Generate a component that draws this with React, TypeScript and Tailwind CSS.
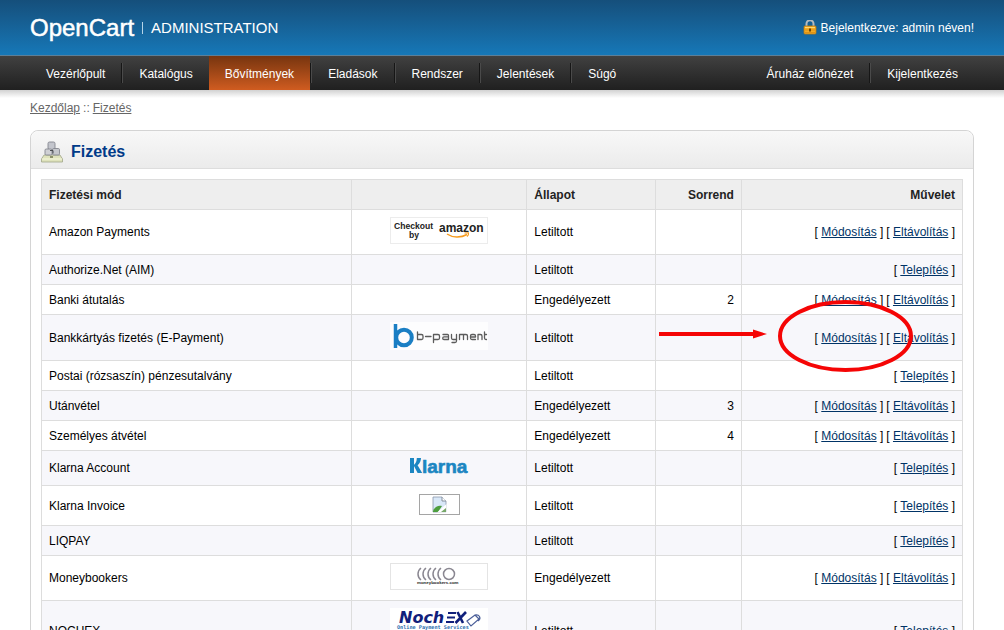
import React from 'react';

type Action = 'Módosítás' | 'Eltávolítás' | 'Telepítés';

interface PaymentMethod {
  name: string;
  status: 'Letiltott' | 'Engedélyezett';
  sortOrder?: number;
  actions: Action[];
  height: string;
  logo?: React.ReactNode;
  marked?: boolean;
}

const AmazonLogo: React.FC = () => (
  <svg width="98" height="28" viewBox="0 0 98 28" role="img" aria-label="Checkout by Amazon">
    <rect x="0.5" y="0.5" width="97" height="26" fill="#fff" stroke="#ececec" />
    <g fontFamily="Liberation Sans, sans-serif" fontWeight="bold" fill="#222">
      <text x="4" y="12" fontSize="8.600">Checkout</text>
      <text x="19" y="21" fontSize="8.600">by</text>
      <text x="49" y="15" fontSize="12">amazon</text>
    </g>
    <path d="M57 17c5.500 3.800 14 3.800 20 0.500" fill="none" stroke="#f79b1d" strokeWidth="1.500" />
    <path d="M74.500 16l4-0.200c0.400 1.200-0.500 2.900-1.500 3.900" fill="none" stroke="#f79b1d" strokeWidth="1.100" />
  </svg>
);

const BPaymentLogo: React.FC = () => (
  <svg width="98" height="28" viewBox="0 0 98 28" role="img" aria-label="b-payment">
    <rect width="98" height="28" fill="#fdfdfe" />
    <path d="M5.500 2v24" stroke="#1b7fc4" strokeWidth="3.500" />
    <circle cx="14" cy="15.500" r="7.800" fill="none" stroke="#1b7fc4" strokeWidth="4" />
    <g fill="none" stroke="#5c5c5c" strokeWidth="1.300" strokeLinecap="round" strokeLinejoin="round">
      <path d="M27.500 10v7.500h4a1.500 1.500 0 0 0 1.500-1.500v-2a1.500 1.500 0 0 0-1.500-1.500h-4" />
      <path d="M35.500 14.500h5.500" />
      <path d="M43.500 20.500v-8h4.500a1.500 1.500 0 0 1 1.500 1.500v2a1.500 1.500 0 0 1-1.500 1.500h-4.500" />
      <path d="M53 12.500h4.500a1 1 0 0 1 1 1v4h-4.500a1.300 1.300 0 0 1 0-2.600h4.500" />
      <path d="M61.500 12.500v3.500a1.500 1.500 0 0 0 1.500 1.500h3.500v-5m0 5v1.500a1.500 1.500 0 0 1-1.500 1.500h-3" />
      <path d="M69.500 17.500v-5h6.500a1.500 1.500 0 0 1 1.500 1.500v3.500m-4-5v5" />
      <path d="M80.500 15h5v-1a1.500 1.500 0 0 0-1.500-1.500h-2a1.500 1.500 0 0 0-1.500 1.500v2a1.500 1.500 0 0 0 1.500 1.500h3.500" />
      <path d="M88 17.500v-5h2.500a1.500 1.500 0 0 1 1.500 1.500v3.500" />
      <path d="M94.500 10v6a1.500 1.500 0 0 0 1.500 1.500h0.500m-2-5h2" />
    </g>
  </svg>
);

const KlarnaLogo: React.FC = () => (
  <svg width="60" height="22" viewBox="0 0 60 22" role="img" aria-label="Klarna">
    <path d="M1 2h4v15h-4zM12 2c0 3-1.200 5.300-3.400 7.200l4.600 7.800h-4.600l-4-7.800c2.200-1.600 3.200-4 3.200-7.200z" fill="#1c86c2" />
    <text x="13" y="17" fontSize="19" fontWeight="bold" fontFamily="Liberation Sans, sans-serif" fill="#1c86c2" stroke="#1c86c2" strokeWidth="0.600">
      larna
    </text>
  </svg>
);

const MissingImage: React.FC = () => (
  <svg width="41" height="21" viewBox="0 0 41 21" role="img" aria-label="Klarna Invoice">
    <rect x="0.5" y="0.5" width="40" height="20" fill="#fff" stroke="#a5a5a5" />
    <path d="M14 3h9l4 4v11h-13z" fill="#d9e8f8" stroke="#8b98ab" strokeWidth="0.800" />
    <path d="M23 3v4h4" fill="#fff" stroke="#7b8794" strokeWidth="0.900" />
    <path d="M14 17c2-5 6-6 9-5l-4 6h-5z" fill="#4d9e3e" />
    <path d="M27.500 10l-9.500 8.500h9.500z" fill="#fff" />
    <path d="M22 18l5-4v4z" fill="#76a768" />
  </svg>
);

const MoneybookersLogo: React.FC = () => (
  <svg width="98" height="28" viewBox="0 0 98 28" role="img" aria-label="Moneybookers">
    <rect x="0.5" y="0.5" width="97" height="26" fill="#fff" stroke="#e4e4e4" />
    <g fill="none" stroke="#8a8791" strokeWidth="1.500">
      <path d="M31 5c-4 3-4 9 0 12M36 5c-4 3-4 9 0 12M41 5c-4 3-4 9 0 12M46 5c-4 3-4 9 0 12M51 5c-4 3-4 9 0 12" />
      <circle cx="59" cy="11" r="5.500" />
    </g>
    <text x="27" y="21" fontSize="4.400" fontWeight="bold" fontFamily="Liberation Sans, sans-serif" fill="#222">moneybookers.com</text>
  </svg>
);

const NochexLogo: React.FC = () => (
  <svg width="98" height="42" viewBox="0 0 98 42" role="img" aria-label="Nochex">
    <rect width="98" height="42" fill="#fff" />
    <text x="9" y="15" fontSize="16" fontWeight="bold" fontStyle="italic" fontFamily="DejaVu Sans, sans-serif" fill="#10207b">Noch</text>
    <path d="M58 5h8M57 9.500h8M56 14h8" stroke="#10207b" strokeWidth="2.200" />
    <path d="M67.500 4l5.500 11M76 4l-10.500 11" stroke="#10207b" strokeWidth="2.600" />
    <path d="M77 13l8-6 4 4-8 7zM85 7c4-1 7 3 3 6" fill="none" stroke="#4b5f99" strokeWidth="1.200" />
    <text x="7" y="21" fontSize="5.200" fontWeight="bold" fontFamily="DejaVu Sans Mono, monospace" fill="#2d6faf">Online Payment Services</text>
  </svg>
);

const LockIcon: React.FC = () => (
  <svg width="14" height="16" viewBox="0 0 14 16" aria-hidden="true">
    <path d="M3.500 7V3.800a3.500 3.500 0 0 1 7 0V7" fill="none" stroke="#b4babd" strokeWidth="2" />
    <rect x="1" y="6" width="12" height="8" rx="1" fill="#f5ac22" stroke="#b97813" strokeWidth="0.800" />
    <path d="M2 7.500h10" stroke="#ffd872" />
    <path d="M2 10h10M2 12.500h10" stroke="#d98c12" strokeWidth="0.800" />
    <path d="M7 8.500v3" stroke="#5f3b05" strokeWidth="1.800" />
  </svg>
);

const PaymentIcon: React.FC = () => (
  <svg width="22" height="22" viewBox="0 0 22 22" aria-hidden="true">
    <path d="M3 14h16l2.500 4v3h-21v-3z" fill="#dfe3bc" stroke="#a0a488" strokeWidth="0.800" />
    <path d="M1 18h20" stroke="#f6f8df" />
    <rect x="7" y="1" width="7" height="7.500" rx="1.500" fill="#c3c5cc" stroke="#85878e" strokeWidth="0.900" />
    <rect x="4" y="8" width="7" height="6" rx="1.200" fill="#cfd0d4" stroke="#85878e" strokeWidth="0.900" />
    <rect x="11.500" y="7.500" width="7" height="6.500" rx="1.200" fill="#c5c7cc" stroke="#85878e" strokeWidth="0.900" />
    <path d="M9 9.500h3v3" fill="none" stroke="#4b4d52" />
    <path d="M9 16h3" stroke="#72764f" strokeWidth="1.500" />
  </svg>
);

const Marker: React.FC = () => (
  <svg
    className="pointer-events-none absolute -top-5 right-11 max-w-none"
    width="260"
    height="84"
    viewBox="0 0 260 84"
    aria-hidden="true"
  >
    <path d="M1 39h96" stroke="#f50505" strokeWidth="4" />
    <path d="M95 34.500l14 4.500-14 4.500z" fill="#f50505" />
    <ellipse cx="187.500" cy="41" rx="65.500" ry="34" fill="none" stroke="#f50505" strokeWidth="4" />
  </svg>
);

const methods: PaymentMethod[] = [
  { name: 'Amazon Payments', status: 'Letiltott', actions: ['Módosítás', 'Eltávolítás'], height: 'h-[45px]', logo: <AmazonLogo /> },
  { name: 'Authorize.Net (AIM)', status: 'Letiltott', actions: ['Telepítés'], height: 'h-[30px]' },
  { name: 'Banki átutalás', status: 'Engedélyezett', sortOrder: 2, actions: ['Módosítás', 'Eltávolítás'], height: 'h-[30px]' },
  { name: 'Bankkártyás fizetés (E-Payment)', status: 'Letiltott', actions: ['Módosítás', 'Eltávolítás'], height: 'h-[46px]', logo: <BPaymentLogo />, marked: true },
  { name: 'Postai (rózsaszín) pénzesutalvány', status: 'Letiltott', actions: ['Telepítés'], height: 'h-[30px]' },
  { name: 'Utánvétel', status: 'Engedélyezett', sortOrder: 3, actions: ['Módosítás', 'Eltávolítás'], height: 'h-[30px]' },
  { name: 'Személyes átvétel', status: 'Engedélyezett', sortOrder: 4, actions: ['Módosítás', 'Eltávolítás'], height: 'h-[30px]' },
  { name: 'Klarna Account', status: 'Letiltott', actions: ['Telepítés'], height: 'h-[35px]', logo: <KlarnaLogo /> },
  { name: 'Klarna Invoice', status: 'Letiltott', actions: ['Telepítés'], height: 'h-[40px]', logo: <MissingImage /> },
  { name: 'LIQPAY', status: 'Letiltott', actions: ['Telepítés'], height: 'h-[30px]' },
  { name: 'Moneybookers', status: 'Engedélyezett', actions: ['Módosítás', 'Eltávolítás'], height: 'h-[45px]', logo: <MoneybookersLogo /> },
  { name: 'NOCHEX', status: 'Letiltott', actions: ['Telepítés'], height: 'h-[60px]', logo: <NochexLogo /> },
];

const mainMenu = ['Vezérlőpult', 'Katalógus', 'Bővítmények', 'Eladások', 'Rendszer', 'Jelentések', 'Súgó'];
const userMenu = ['Áruház előnézet', 'Kijelentkezés'];

const Menu: React.FC<{ items: string[]; active?: string }> = ({ items, active }) => (
  <ul className="flex">
    {items.map((item, i) => {
      const isActive = item === active;
      const divided = i < items.length - 1 && items[i + 1] !== active;
      return (
        <li key={item} className="flex items-center">
          <a
            href="#"
            className={`flex h-[34px] items-center px-4 pt-px text-white ${
              isActive ? 'bg-linear-to-b from-[#77350f] to-[#d05c20]' : ''
            }`}
          >
            {item}
          </a>
          {divided && <span className="h-5 w-0.5 border-l border-[#161616] bg-[#4a4a4a]" />}
        </li>
      );
    })}
  </ul>
);

const Header: React.FC = () => (
  <header>
    <div className="flex h-[55px] items-center justify-between bg-linear-to-b from-[#154f7b] to-[#1678b8] px-[30px] text-white">
      <div className="flex items-center">
        <span className="text-2xl leading-7 [-webkit-text-stroke:0.5px_white]">OpenCart</span>
        <span className="mx-2 h-3 w-px bg-[#b5d4e8]" />
        <span className="text-[15px] leading-7">ADMINISTRATION</span>
      </div>
      <div className="flex items-center gap-1">
        <LockIcon />
        <span>Bejelentkezve: admin néven!</span>
      </div>
    </div>
    <nav className="flex justify-between border-t border-[#5d7f97] bg-linear-to-b from-[#414141] to-[#202020] px-[30px]">
      <Menu items={mainMenu} active="Bővítmények" />
      <Menu items={userMenu} />
    </nav>
    <div className="h-2 bg-linear-to-b from-[#d2d2d2] to-white" />
  </header>
);

const headCell = 'h-[30px] border-r border-b border-[#dddddd] px-[7px] font-bold text-[#222222]';
const bodyCell = 'border-r border-b border-[#dddddd] px-[7px]';

const MethodRow: React.FC<{ method: PaymentMethod }> = ({ method }) => (
  <tr className="odd:bg-white even:bg-[#f7f7fb]">
    <td className={`${bodyCell} ${method.height}`}>{method.name}</td>
    <td className={bodyCell}>
      <div className="flex justify-center pb-[3px]">{method.logo}</div>
    </td>
    <td className={bodyCell}>{method.status}</td>
    <td className={`${bodyCell} text-right`}>{method.sortOrder}</td>
    <td className={`${bodyCell} relative text-right whitespace-nowrap`}>
      {method.actions.map((action) => (
        <span key={action} className="ml-[3px]">
          [ <a href="#" className="text-[#003366] underline">{action}</a> ]
        </span>
      ))}
      {method.marked && <Marker />}
    </td>
  </tr>
);

function App() {
  return (
    <div className="min-h-screen bg-white font-['Liberation_Sans',Arial,sans-serif] text-xs text-black">
      <Header />
      <main className="px-[30px] pb-6">
        <div className="mt-0.5 flex gap-[3px] leading-4 text-[#666666]">
          <a href="#" className="underline">Kezdőlap</a>
          <span>::</span>
          <a href="#" className="underline">Fizetés</a>
        </div>
        <section className="mt-[14px] rounded-t-lg border border-[#d4d4d4]">
          <div className="flex h-[38px] items-center gap-2 rounded-t-lg border-b border-[#dddddd] bg-linear-to-b from-[#f8f8f8] to-[#ebebeb] px-[10px] pt-1">
            <PaymentIcon />
            <h1 className="text-base font-bold text-[#003a88]">Fizetés</h1>
          </div>
          <div className="p-[10px]">
            <table className="w-full table-fixed border-separate border-spacing-0 border-t border-l border-[#dddddd]">
              <colgroup>
                <col className="w-[33.7%]" />
                <col className="w-[19%]" />
                <col className="w-[14%]" />
                <col className="w-[9.3%]" />
                <col className="w-[24%]" />
              </colgroup>
              <thead className="bg-[#eeeeee]">
                <tr>
                  <th className={`${headCell} text-left`}>Fizetési mód</th>
                  <th className={headCell}></th>
                  <th className={`${headCell} text-left`}>Állapot</th>
                  <th className={`${headCell} text-right`}>Sorrend</th>
                  <th className={`${headCell} text-right`}>Művelet</th>
                </tr>
              </thead>
              <tbody>
                {methods.map((method) => (
                  <MethodRow key={method.name} method={method} />
                ))}
              </tbody>
            </table>
          </div>
        </section>
      </main>
    </div>
  );
}

export default App;
